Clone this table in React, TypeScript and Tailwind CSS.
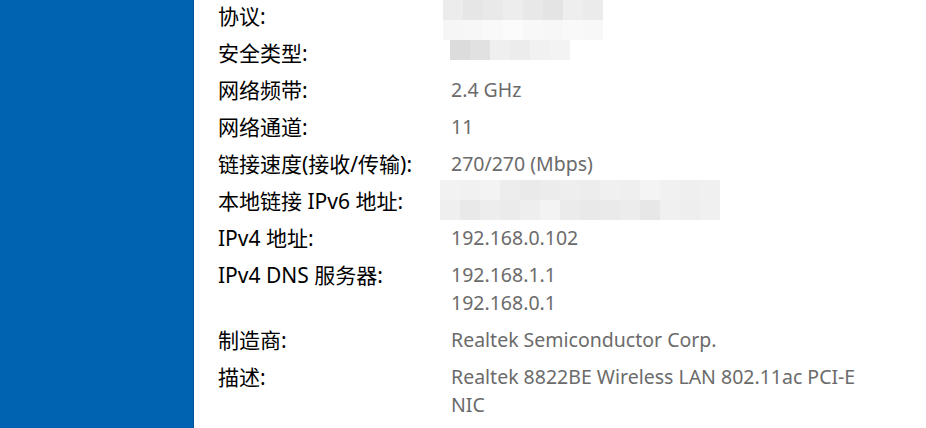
const rows: { label: string; value?: string[]; blur?: 'a' | 'b' | 'ipv6' }[] = [
  { label: '协议:', blur: 'a' },
  { label: '安全类型:', blur: 'b' },
  { label: '网络频带:', value: ['2.4 GHz'] },
  { label: '网络通道:', value: ['11'] },
  { label: '链接速度(接收/传输):', value: ['270/270 (Mbps)'] },
  { label: '本地链接 IPv6 地址:', blur: 'ipv6' },
  { label: 'IPv4 地址:', value: ['192.168.0.102'] },
  { label: 'IPv4 DNS 服务器:', value: ['192.168.1.1', '192.168.0.1'] },
  { label: '制造商:', value: ['Realtek Semiconductor Corp.'] },
  { label: '描述:', value: ['Realtek 8822BE Wireless LAN 802.11ac PCI-E', 'NIC'] },
]

// mosaic blocks standing in for the pixelated values
const BLUR_A = [
  ['#ececec', '#e6e6e6', '#e9e9e9', '#ededed', '#e8e8e8', '#e4e4e4', '#eeeeee', '#ebebeb'],
  ['#f6f6f6', '#f7f7f7', '#f9f9f9', '#fbfbfb', '#f8f8f8', '#f7f7f7', '#f9f9f9', '#f8f8f8'],
]
const BLUR_B = ['#dcdcdc', '#e1e1e1', '#efefef', '#ececec', '#f1f1f1', '#f3f3f3']
const BLUR_IPV6 = [
  ['#f2f2f2', '#f1f1f1', '#f3f3f3', '#ededed', '#eaeaea', '#ececec', '#eeeeee', '#ededed', '#f0f0f0', '#efefef', '#f4f4f4', '#f1f1f1', '#efefef', '#f0f0f0'],
  ['#efefef', '#e9e9e9', '#ededed', '#ebebeb', '#eeeeee', '#f3f3f3', '#ebebeb', '#e9e9e9', '#eaeaea', '#ececec', '#e7e7e7', '#f0f0f0', '#eeeeee', '#f0f0f0'],
]

function Blocks({ colors }: { colors: string[] }) {
  return (
    <div className="flex">
      {colors.map((c, i) => (
        <div key={i} className="w-[20px] h-[20px]" style={{ background: c }} />
      ))}
    </div>
  )
}

export default function App() {
  return (
    <div className="flex w-[926px] h-[428px] overflow-hidden bg-white" style={{ fontFamily: '"Noto Sans", "Noto Sans CJK SC", sans-serif' }}>
      <div className="w-[194px] shrink-0 bg-[#0063b1] border-r border-[#00569c]" />
      <div className="flex-1 pl-[24px] pt-[2px] relative">
        {rows.map(r => (
          <div key={r.label} className="flex mb-[9px] leading-[28px]">
            <div className="w-[233px] shrink-0 text-black text-[21px]">{r.label}</div>
            <div className="text-[#6b6b6b] text-[19.5px]">
              {r.value?.map(v => <div key={v}>{v}</div>)}
              {r.blur && <div className="h-[28px]" />}
            </div>
          </div>
        ))}
        <div className="absolute left-[249px] top-0">
          <Blocks colors={BLUR_A[0]} />
          <Blocks colors={BLUR_A[1]} />
          <div className="pl-[7px]"><Blocks colors={BLUR_B} /></div>
        </div>
        <div className="absolute left-[246px] top-[180px]">
          <Blocks colors={BLUR_IPV6[0]} />
          <Blocks colors={BLUR_IPV6[1]} />
        </div>
      </div>
    </div>
  )
}
